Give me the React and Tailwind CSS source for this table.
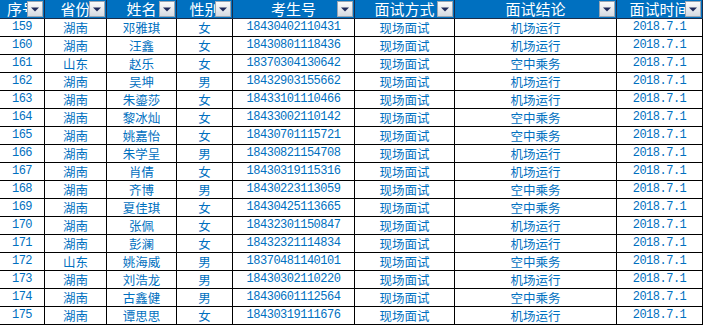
import React from 'react';

const cols = ['序号', '省份', '姓名', '性别', '考生号', '面试方式', '面试结论', '面试时间'];

const rows = [
  ['159', '湖南', '邓雅琪', '女', '18430402110431', '现场面试', '机场运行'],
  ['160', '湖南', '汪鑫', '女', '18430801118436', '现场面试', '机场运行'],
  ['161', '山东', '赵乐', '女', '18370304130642', '现场面试', '空中乘务'],
  ['162', '湖南', '吴坤', '男', '18432903155662', '现场面试', '机场运行'],
  ['163', '湖南', '朱鎏莎', '女', '18433101110466', '现场面试', '机场运行'],
  ['164', '湖南', '黎冰灿', '女', '18433002110142', '现场面试', '空中乘务'],
  ['165', '湖南', '姚嘉怡', '女', '18430701115721', '现场面试', '空中乘务'],
  ['166', '湖南', '朱学呈', '男', '18430821154708', '现场面试', '机场运行'],
  ['167', '湖南', '肖倩', '女', '18430319115316', '现场面试', '机场运行'],
  ['168', '湖南', '齐博', '男', '18430223113059', '现场面试', '空中乘务'],
  ['169', '湖南', '夏佳琪', '女', '18430425113665', '现场面试', '空中乘务'],
  ['170', '湖南', '张佩', '女', '18432301150847', '现场面试', '机场运行'],
  ['171', '湖南', '彭澜', '女', '18432321114834', '现场面试', '机场运行'],
  ['172', '山东', '姚海威', '男', '18370481140101', '现场面试', '空中乘务'],
  ['173', '湖南', '刘浩龙', '男', '18430302110220', '现场面试', '机场运行'],
  ['174', '湖南', '古鑫健', '男', '18430601112564', '现场面试', '空中乘务'],
  ['175', '湖南', '谭思思', '女', '18430319111676', '现场面试', '机场运行'],
];

// numeric cells get the narrow mono face, like the sheet's half-width digits
const numCols = [0, 4, 7];

const FilterButton = () => (
  <span className="absolute right-[1px] top-[1px] w-[16px] h-[16px] border border-[#9aa6b4] bg-gradient-to-b from-[#fbfbfb] to-[#d6dbe2] flex items-center justify-center">
    <svg width="8" height="5" viewBox="0 0 8 5">
      <path d="M0 0.5h8L4 4.5z" fill="#1f2a5c" />
    </svg>
  </span>
);

export default function App() {
  return (
    <div className="w-[708px] h-[326px] bg-white overflow-hidden" style={{ fontFamily: '"Noto Sans CJK SC", sans-serif' }}>
      <div className="grid grid-cols-[45px_62px_70px_56px_122px_100px_162px_86px] w-[703px]">
        {cols.map((c) => (
          <div
            key={c}
            className="relative h-[19px] bg-[#0070c0] border-r border-b border-[#1b2d4a] text-white text-[15px] leading-[17px] text-center whitespace-nowrap overflow-hidden"
          >
            {c}
            <FilterButton />
          </div>
        ))}
        {rows.map((r) => (
          <React.Fragment key={r[0]}>
            {[...r, '2018.7.1'].map((v, j) => (
              <div
                key={j}
                className={
                  'h-[18px] border-r border-b border-black text-[#0070c0] text-center leading-[17px] whitespace-nowrap ' +
                  (numCols.includes(j)
                    ? 'text-[12px] tracking-[-0.5px] font-["Liberation_Mono",monospace]'
                    : 'text-[12.5px]')
                }
              >
                {v}
              </div>
            ))}
          </React.Fragment>
        ))}
      </div>
    </div>
  );
}
